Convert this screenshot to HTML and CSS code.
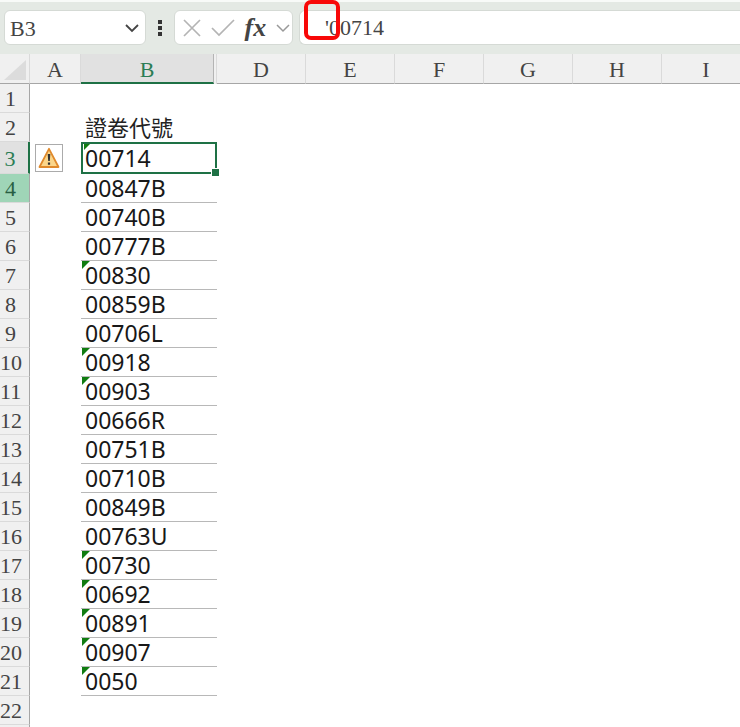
FILE: index.html
```html
<!DOCTYPE html>
<html lang="zh-Hant">
<head>
<meta charset="utf-8">
<title>證卷代號</title>
<link rel="stylesheet" href="styles.css">
</head>
<body>
<header class="bar">
  <div class="box name-box">
    <input class="name-input" type="text" value="B3" aria-label="Name box">
    <button class="icon-btn" type="button" aria-label="Open name list"><svg width="16" height="10" viewBox="0 0 16 10"><path d="M2 2l6 6 6-6" fill="none" stroke="#444" stroke-width="1.8"/></svg></button>
  </div>
  <div class="dots"><svg width="4" height="16" viewBox="0 0 4 16" fill="#333"><path d="M0 0h4v4H0zM0 6h4v4H0zM0 12h4v4H0z"/></svg></div>
  <div class="box tools">
    <button class="icon-btn" type="button" aria-label="Cancel"><svg width="18" height="18" viewBox="0 0 18 18"><path d="M1 1l16 16M17 1L1 17" fill="none" stroke="#b4b4b4" stroke-width="1.7"/></svg></button>
    <button class="icon-btn" type="button" aria-label="Enter"><svg width="24" height="18" viewBox="0 0 24 18"><path d="M1 9l7 7L23 1" fill="none" stroke="#b4b4b4" stroke-width="1.7"/></svg></button>
    <button class="icon-btn fx" type="button">fx</button>
    <button class="icon-btn" type="button" aria-label="Function list"><svg width="14" height="10" viewBox="0 0 14 10"><path d="M1 2l6 6 6-6" fill="none" stroke="#999" stroke-width="1.5"/></svg></button>
  </div>
  <div class="box formula">
    <input class="formula-input" type="text" value="'00714" aria-label="Formula bar">
    <span class="marker"></span>
  </div>
</header>
<main class="sheet">
<table class="grid">
  <colgroup><col class="c-num"><col class="c-a"><col class="c-b"><col class="c-w"><col class="c-w"><col class="c-w"><col class="c-w"><col class="c-w"><col class="c-w"></colgroup>
  <thead>
    <tr><th class="corner"><svg width="22" height="20" viewBox="0 0 22 20"><path d="M22 0v20H0z" fill="#dcdcdc"/></svg></th><th>A</th><th class="active"><span>B</span></th><th>D</th><th>E</th><th>F</th><th>G</th><th>H</th><th>I</th></tr>
  </thead>
  <tbody>
    <tr><th>1</th><td></td><td></td></tr>
    <tr><th>2</th><td></td><td class="title">證卷代號</td></tr>
    <tr class="current"><th>3</th><td><button class="warn" type="button" aria-label="Error options"><svg width="22" height="22" viewBox="0 0 22 22"><path d="M11 1.8L20.500 20H1.500z" fill="#fbd68a" stroke="#e08a2c" stroke-width="1.8" stroke-linejoin="round"/><path d="M9.700 7h2.600l-.5 7h-1.600zM9.900 15.500h2.200v2.200H9.900z" fill="#333"/></svg></button></td><td class="code flag selected">00714</td></tr>
    <tr class="next"><th>4</th><td></td><td class="code">00847B</td></tr>
    <tr><th>5</th><td></td><td class="code">00740B</td></tr>
    <tr><th>6</th><td></td><td class="code">00777B</td></tr>
    <tr><th>7</th><td></td><td class="code flag">00830</td></tr>
    <tr><th>8</th><td></td><td class="code">00859B</td></tr>
    <tr><th>9</th><td></td><td class="code">00706L</td></tr>
    <tr><th>10</th><td></td><td class="code flag">00918</td></tr>
    <tr><th>11</th><td></td><td class="code flag">00903</td></tr>
    <tr><th>12</th><td></td><td class="code">00666R</td></tr>
    <tr><th>13</th><td></td><td class="code">00751B</td></tr>
    <tr><th>14</th><td></td><td class="code">00710B</td></tr>
    <tr><th>15</th><td></td><td class="code">00849B</td></tr>
    <tr><th>16</th><td></td><td class="code">00763U</td></tr>
    <tr><th>17</th><td></td><td class="code flag">00730</td></tr>
    <tr><th>18</th><td></td><td class="code flag">00692</td></tr>
    <tr><th>19</th><td></td><td class="code flag">00891</td></tr>
    <tr><th>20</th><td></td><td class="code flag">00907</td></tr>
    <tr><th>21</th><td></td><td class="code flag">0050</td></tr>
    <tr><th>22</th><td></td><td></td></tr>
    <tr><th></th><td></td><td></td></tr>
  </tbody>
</table>
</main>
</body>
</html>
```
FILE: styles.css
```css
* { box-sizing: border-box; }
body {
  margin: 0;
  background: #fff;
  color: #222;
  font-family: "Liberation Serif", "Noto Sans CJK TC", serif;
  font-size: 22px;
  overflow: hidden;
}
button, input {
  margin: 0;
  padding: 0;
  border: 0;
  background: none;
  font: inherit;
  color: #444;
  outline: none;
}
svg { display: block; }

.bar {
  display: flex;
  height: 54px;
  padding: 8px 0 10px 4px;
  border-top: 2px solid #f8faf8;
  background: #e4e9e4;
}
.box {
  display: flex;
  align-items: center;
  height: 35px;
  border: 1px solid #d5dad5;
  border-radius: 6px;
  background: #fff;
}
.name-box { width: 142px; padding: 0 5px; }
.name-input { flex: 1; min-width: 0; height: 32px; padding-top: 2px; }
.dots { display: flex; align-items: center; justify-content: center; width: 28px; height: 35px; }
.tools { width: 119px; padding: 0 2px 0 8px; justify-content: space-between; }
.fx {
  color: #444;
  font-size: 26px;
  line-height: 26px;
  font-style: italic;
  font-weight: bold;
}
.formula {
  position: relative;
  flex: 1;
  margin-left: 6px;
  border-right: 0;
  border-radius: 6px 0 0 6px;
}
.formula-input { width: 100%; height: 32px; padding: 0 0 0 25px; }
.marker {
  position: absolute;
  left: 4px;
  top: -11px;
  width: 36px;
  height: 40px;
  border: 4px solid #f80808;
  border-radius: 7px;
}

.sheet { overflow: hidden; }
.grid {
  width: 751px;
  table-layout: fixed;
  border-collapse: separate;
  border-spacing: 0;
}
.c-num { width: 30px; }
.c-a { width: 51px; }
.c-b { width: 136px; }
.c-w { width: 89px; }
.grid th, .grid td { height: 29px; padding: 0; font-weight: normal; line-height: 26px; }
.grid th { background: #f0f0f0; color: #444; }
.grid thead th {
  height: 30px;
  padding-top: 3px;
  border-right: 1px solid #dadada;
  border-bottom: 1px solid #a6a6a6;
}
.grid thead .corner { padding: 3px 0 0 4px; }
.grid thead .active { padding: 0; border-bottom: 0; }
.active span {
  display: block;
  height: 30px;
  margin-right: 2px;
  padding-top: 3px;
  border-right: 1px solid #b4b4b4;
  border-bottom: 2px solid #1e7145;
  background: #e1e1e1;
  color: #2c7d55;
}
.grid tbody th {
  padding: 2px 8px 0 0;
  border-right: 1px solid #a6a6a6;
  border-bottom: 1px solid #dadada;
  line-height: 24px;
}
.grid .current th {
  height: 32px;
  border-right: 2px solid #1e7145;
  background: #e1e1e1;
  color: #2c7d55;
}
.grid .next th { background: #9fd5b7; color: #285f43; }

.grid .title {
  padding: 0 0 4px 4px;
  font-family: "Noto Sans CJK TC", sans-serif;
  line-height: 24px;
}
.grid .code {
  position: relative;
  padding-left: 4px;
  border-bottom: 1px solid #b8b8b8;
  color: #181818;
  font-family: "Noto Sans", "Open Sans", sans-serif;
  font-size: 23px;
}
.flag::before {
  content: "";
  position: absolute;
  left: 1px;
  top: 0;
  border-top: 8px solid #107c10;
  border-right: 8px solid transparent;
}
.grid .selected { border: 2px solid #1e7145; padding-left: 2px; }
.selected::before { border-width: 6px; border-bottom: 0; border-left: 0; }
.selected::after {
  content: "";
  position: absolute;
  right: -4px;
  bottom: -4px;
  width: 7px;
  height: 7px;
  border: 1px solid #fff;
  border-width: 1px 0 0 1px;
  background: #1e7145;
}
.warn {
  display: flex;
  align-items: center;
  justify-content: center;
  width: 28px;
  height: 28px;
  margin-left: 5px;
  border: 1px solid #ababab;
  background: #fff;
}
```
